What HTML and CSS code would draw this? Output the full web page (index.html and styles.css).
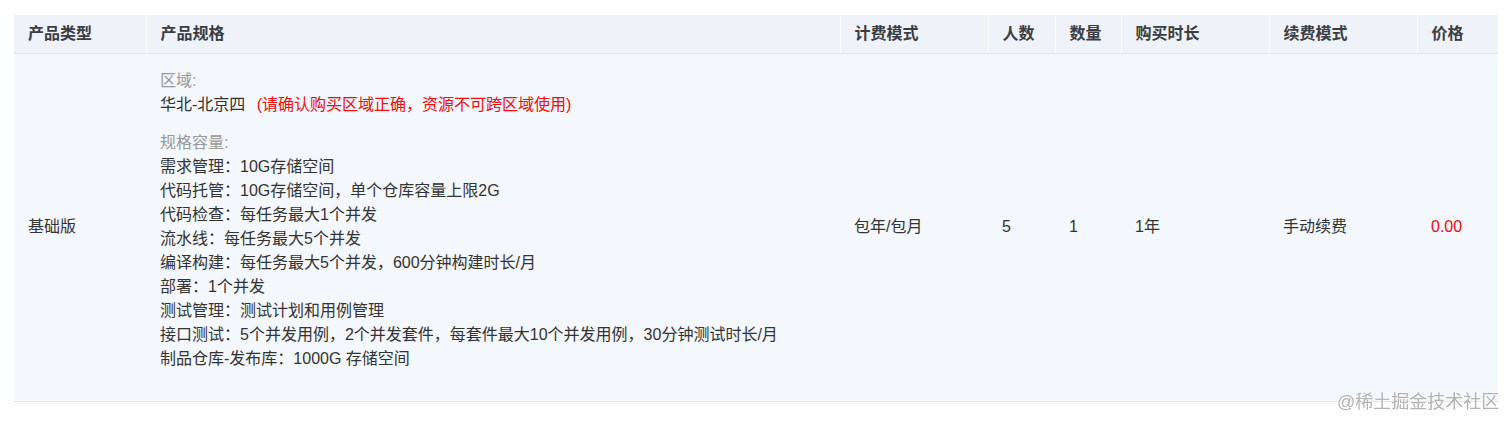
FILE: index.html
```html
<!DOCTYPE html>
<html lang="zh-CN">
<head>
<meta charset="utf-8">
<title>产品规格</title>
<link rel="stylesheet" href="styles.css">
</head>
<body>
<div class="wrap">
  <table class="order">
    <colgroup>
      <col class="c1"><col class="c2"><col class="c3"><col class="c4"><col class="c5"><col class="c6"><col class="c7"><col class="c8">
    </colgroup>
    <thead>
      <tr>
        <th>产品类型</th>
        <th>产品规格</th>
        <th>计费模式</th>
        <th>人数</th>
        <th>数量</th>
        <th>购买时长</th>
        <th>续费模式</th>
        <th>价格</th>
      </tr>
    </thead>
    <tbody>
      <tr>
        <td>基础版</td>
        <td class="spec">
          <div class="block">
            <div class="label">区域:</div>
            <div>华北-北京四 <span class="warn">(请确认购买区域正确，资源不可跨区域使用)</span></div>
          </div>
          <div class="block">
            <div class="label">规格容量:</div>
            <div>需求管理：10G存储空间</div>
            <div>代码托管：10G存储空间，单个仓库容量上限2G</div>
            <div>代码检查：每任务最大1个并发</div>
            <div>流水线：每任务最大5个并发</div>
            <div>编译构建：每任务最大5个并发，600分钟构建时长/月</div>
            <div>部署：1个并发</div>
            <div>测试管理：测试计划和用例管理</div>
            <div>接口测试：5个并发用例，2个并发套件，每套件最大10个并发用例，30分钟测试时长/月</div>
            <div>制品仓库-发布库：1000G 存储空间</div>
          </div>
        </td>
        <td>包年/包月</td>
        <td>5</td>
        <td>1</td>
        <td>1年</td>
        <td>手动续费</td>
        <td class="price">0.00</td>
      </tr>
    </tbody>
  </table>
</div>
<div class="watermark">@稀土掘金技术社区</div>
</body>
</html>
```

FILE: styles.css
```css
html, body {
  margin: 0;
  padding: 0;
  background: #ffffff;
}
body {
  font-family: "Liberation Sans", "Noto Sans CJK SC", sans-serif;
  color: #303133;
}
.wrap {
  padding: 15px 14px 0 14px;
  width: 1484px;
}
.order {
  width: 1484px;
  border-collapse: collapse;
  table-layout: fixed;
  font-size: 16px;
  line-height: 24px;
}
.c1 { width: 132px; }
.c2 { width: 694px; }
.c3 { width: 148px; }
.c4 { width: 67px; }
.c5 { width: 66px; }
.c6 { width: 148px; }
.c7 { width: 148px; }
.c8 { width: 81px; }

.order th {
  background: #eff2f9;
  text-align: left;
  font-weight: bold;
  color: #3a3d42;
  padding: 7px 14px;
  border-right: 1px solid #fbfcfe;
  border-bottom: 1px solid #e3e7ef;
}
.order th:last-child { border-right: none; }
.order td {
  background: #f4f7fc;
  padding: 15px 14px 16px 14px;
  vertical-align: middle;
  border-bottom: 1px solid #e2e5ea;
  color: #333333;
}
.order td.spec {
  vertical-align: top;
}
.block {
  padding-bottom: 14px;
}
.label {
  color: #999999;
}
.warn {
  color: #f30d0d;
  margin-left: 7px;
}
.order td.price {
  color: #f30d0d;
}
.watermark {
  position: fixed;
  left: 1337px;
  top: 389px;
  font-size: 18px;
  line-height: 26px;
  color: #b3b3b3;
  text-shadow: 0 0 2px #ffffff, 0 0 1px #ffffff;
  white-space: nowrap;
  z-index: 5;
}
```
